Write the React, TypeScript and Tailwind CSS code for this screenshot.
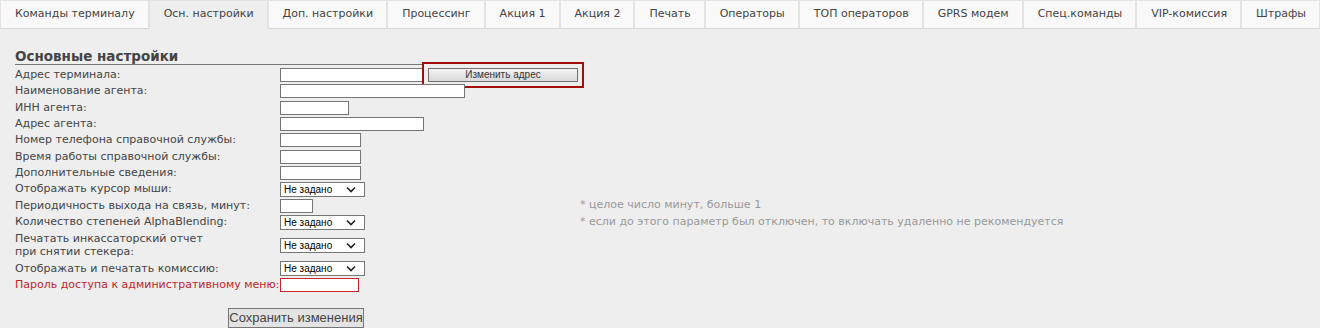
import React from "react";

const TABS = [
  "Команды терминалу",
  "Осн. настройки",
  "Доп. настройки",
  "Процессинг",
  "Акция 1",
  "Акция 2",
  "Печать",
  "Операторы",
  "ТОП операторов",
  "GPRS модем",
  "Спец.команды",
  "VIP-комиссия",
  "Штрафы",
];

const ACTIVE = 1;

function TextInput({ width, red }: { width: string; red?: boolean }) {
  return (
    <input
      type="text"
      className={
        "h-[14px] bg-white border outline-none " +
        width +
        (red ? " border-[#c8262b]" : " border-[#767676]")
      }
    />
  );
}

function Select() {
  return (
    <div className="relative w-[85px] h-[15px]">
      <select className="appearance-none w-full h-full bg-white border border-[#767676] pl-[3px] text-[10px] leading-[13px] text-black font-['Liberation_Sans',sans-serif] outline-none">
        <option>Не задано</option>
      </select>
      <svg
        className="absolute right-[9px] top-[4px] pointer-events-none"
        width="10"
        height="7"
        viewBox="0 0 10 7"
      >
        <path d="M1 1.5 L5 5.5 L9 1.5" fill="none" stroke="#222" strokeWidth="1.6" />
      </svg>
    </div>
  );
}

type Row = {
  label: React.ReactNode;
  control: React.ReactNode;
  hint?: string;
  tall?: boolean;
  red?: boolean;
};

const ROWS: Row[] = [
  {
    label: "Адрес терминала:",
    control: (
      <div className="flex items-center">
        <TextInput width="w-[143px]" />
        <button className="ml-[5px] w-[150px] h-[14px] border border-[#707070] bg-gradient-to-b from-[#f3f3f3] to-[#d9d9d9] text-[10px] leading-[12px] text-[#333] font-['Liberation_Sans',sans-serif] outline-2 outline-solid outline-[#a50d0d] outline-offset-[4px]">
          Изменить адрес
        </button>
      </div>
    ),
  },
  { label: "Наименование агента:", control: <TextInput width="w-[185px]" /> },
  { label: "ИНН агента:", control: <TextInput width="w-[69px]" /> },
  { label: "Адрес агента:", control: <TextInput width="w-[144px]" /> },
  { label: "Номер телефона справочной службы:", control: <TextInput width="w-[81px]" /> },
  { label: "Время работы справочной службы:", control: <TextInput width="w-[81px]" /> },
  { label: "Дополнительные сведения:", control: <TextInput width="w-[81px]" /> },
  { label: "Отображать курсор мыши:", control: <Select /> },
  {
    label: "Периодичность выхода на связь, минут:",
    control: <TextInput width="w-[33px]" />,
    hint: "* целое число минут, больше 1",
  },
  {
    label: "Количество степеней AlphaBlending:",
    control: <Select />,
    hint: "* если до этого параметр был отключен, то включать удаленно не рекомендуется",
  },
  {
    label: (
      <>
        Печатать инкассаторский отчет
        <br />
        при снятии стекера:
      </>
    ),
    control: <Select />,
    tall: true,
  },
  { label: "Отображать и печатать комиссию:", control: <Select /> },
  {
    label: "Пароль доступа к административному меню:",
    control: <TextInput width="w-[79px]" red />,
    red: true,
  },
];

export default function App() {
  return (
    <div className="w-[1320px] h-[328px] bg-[#eeeeee] overflow-hidden">
      <div className="flex h-[29px]">
        {TABS.map((t, i) => (
          <div
            key={t}
            className={
              "h-full pl-[14px] pr-[13px] flex items-center border-x border-t border-[#e3e3e3] text-[11px] text-[#444] font-['DejaVu_Sans',sans-serif] whitespace-nowrap " +
              (i === ACTIVE
                ? "bg-[#eeeeee] border-b border-b-[#eeeeee]"
                : "bg-[#f9f9f9] border-b border-b-[#d6d6d6]")
            }
          >
            {t}
          </div>
        ))}
        <div className="flex-1 border-b border-[#d6d6d6]" />
      </div>

      <div className="pl-[15px] pt-[19px]">
        <h3 className="w-[407px] border-b border-[#777] text-[13.5px] leading-[16px] font-bold text-[#444] font-['DejaVu_Sans',sans-serif]">
          Основные настройки
        </h3>

        <div className="mt-[2px] grid grid-cols-[265px_300px_auto] font-['DejaVu_Sans',sans-serif] text-[11px] text-[#444]">
          {ROWS.map((r, i) => (
            <React.Fragment key={i}>
              <div
                className={
                  "flex items-center whitespace-nowrap " +
                  (r.tall ? "h-[30px] leading-[13px]" : "h-[16.3px] leading-[16px]") +
                  (r.red ? " text-[#c0262c]" : "")
                }
              >
                <span>{r.label}</span>
              </div>
              <div className="flex items-center">{r.control}</div>
              <div className="flex items-center whitespace-nowrap text-[#999]">
                {r.hint}
              </div>
            </React.Fragment>
          ))}
        </div>

        <button className="mt-[15px] ml-[213px] w-[136px] h-[20px] border border-[#777] bg-[#e3e3e3] text-[13px] leading-[18px] whitespace-nowrap text-[#444] font-['Liberation_Sans',sans-serif]">
          Сохранить изменения
        </button>
      </div>
    </div>
  );
}
